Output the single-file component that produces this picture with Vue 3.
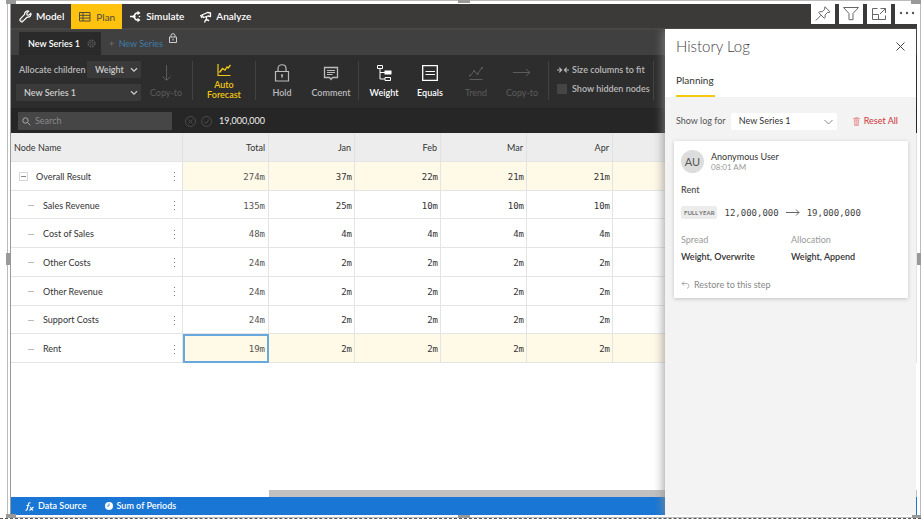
<script setup>
import { ref } from 'vue'

const months = ['Jan', 'Feb', 'Mar', 'Apr']
const rows = [
  { name: 'Overall Result', total: '274m', values: ['37m', '22m', '21m', '21m'], root: true, shaded: true },
  { name: 'Sales Revenue', total: '135m', values: ['25m', '10m', '10m', '10m'] },
  { name: 'Cost of Sales', total: '48m', values: ['4m', '4m', '4m', '4m'] },
  { name: 'Other Costs', total: '24m', values: ['2m', '2m', '2m', '2m'] },
  { name: 'Other Revenue', total: '24m', values: ['2m', '2m', '2m', '2m'] },
  { name: 'Support Costs', total: '24m', values: ['2m', '2m', '2m', '2m'] },
  { name: 'Rent', total: '19m', values: ['2m', '2m', '2m', '2m'], shaded: true, selected: true }
]
const method = ref('Weight')
const series = ref('New Series 1')
const logSeries = ref('New Series 1')
const search = ref('')
const showHidden = ref(false)
</script>

<template>
  <div class="report">
    <span class="handle top-left"></span>
    <span class="handle top"></span>
    <span class="handle top-right"></span>
    <span class="handle left"></span>
    <span class="handle right"></span>
    <span class="handle bottom-left"></span>
    <span class="handle bottom"></span>
    <span class="handle bottom-right"></span>

    <div class="visual">
      <nav class="modes">
        <button class="mode model">
          <svg width="13" height="13" viewBox="0 0 13 13"><path d="M11.8 3.2 9.7 5.1 8 4.9 7.8 3.2 9.8 1.2C8 .4 5.4 1.600 5.600 4.400L1.300 8.900c-1.200 1.500.9 3.700 2.500 2.500L8.300 7c2.700.400 4.300-1.800 3.500-3.800z" fill="none" stroke="currentColor" stroke-width="1.200" stroke-linejoin="round" /><circle cx="3" cy="10" r=".6" fill="currentColor" /></svg>
          Model
        </button>
        <button class="mode plan active">
          <svg width="12" height="11" viewBox="0 0 12 11"><path d="M.5 1.500h10.500v8.500H.5zM.5 4.300h10.500M.5 7.100h10.500M4 1.500v8.500" fill="none" stroke="currentColor" /></svg>
          Plan
        </button>
        <button class="mode simulate">
          <svg width="12" height="13" viewBox="0 0 12 13"><path d="M0 6.500h4M8.500 3H7.500Q4.500 3 4.500 6.500t3 3.500H8.500" fill="none" stroke="currentColor" stroke-width="1.400" /><path d="M7.500.7l3 2.300-3 2.300zM7.500 7.700l3 2.300-3 2.300z" fill="currentColor" /><circle cx="4" cy="6.500" r="1.500" fill="currentColor" /><circle cx="9.500" cy="6.500" r=".8" fill="currentColor" /></svg>
          Simulate
        </button>
        <button class="mode analyze">
          <svg width="12" height="13" viewBox="0 0 12 13"><path d="M2 5 7.500 2.500l3 .5v3.500L8 6 3.500 7.500zM.5 5l1.500 3M6.500 7v2.500M4.500 12.500l1-2.500H8l1 1" fill="none" stroke="currentColor" stroke-width="1.300" stroke-linejoin="round" /></svg>
          Analyze
        </button>
      </nav>

      <div class="tabs">
        <button class="tab">
          New Series 1
          <svg width="9" height="9" viewBox="0 0 9 9"><circle cx="4.500" cy="4.500" r="3.300" fill="none" stroke="#5a5a5a" stroke-width="1.600" stroke-dasharray="1.600 1" /><circle cx="4.500" cy="4.500" r="1.500" fill="none" stroke="#5a5a5a" stroke-width=".8" /></svg>
        </button>
        <button class="add"><span class="plus">+</span> New Series</button>
        <svg class="tab-lock" width="8" height="10" viewBox="0 0 8 10"><path d="M.5 4h7v5.500h-7zM2 4V2.500q0-1.800 2-1.800t2 1.800V4M4 5.500v2" fill="none" stroke="#d0d0d0" /></svg>
      </div>

      <div class="toolbar">
        <div class="allocate">
          <div class="allocate-row">
            <label for="method">Allocate children</label>
            <span class="pick short">
              <select id="method" v-model="method"><option>Weight</option></select>
              <svg width="8" height="6" viewBox="0 0 8 6"><path d="M1 1.200l3 3 3-3" fill="none" stroke="#ccc" stroke-width="1.300" /></svg>
            </span>
          </div>
          <span class="pick">
            <select v-model="series" aria-label="Series"><option>New Series 1</option></select>
            <svg width="8" height="6" viewBox="0 0 8 6"><path d="M1 1.200l3 3 3-3" fill="none" stroke="#ccc" stroke-width="1.300" /></svg>
          </span>
        </div>
        <div class="group">
          <button class="tool off" disabled>
            <svg width="16" height="20" viewBox="0 0 16 20"><path d="M8.500 2v15M4.500 13.500l4 4 4-4" fill="none" stroke="currentColor" /></svg>
            <span>Copy-to</span>
          </button>
        </div>
        <i class="rule"></i>
        <div class="group wide">
          <button class="tool forecast">
            <svg width="16" height="14" viewBox="0 0 16 14"><path d="M2 1v11.500h12.500" fill="none" stroke="currentColor" stroke-width="1.200" /><path d="M3.500 9.500l3-4 2.500 1.700L11 4l1.200 1 2.300-3" fill="none" stroke="currentColor" stroke-width="1.300" /></svg>
            <span>Auto Forecast</span>
          </button>
        </div>
        <i class="rule"></i>
        <div class="group spaced">
          <button class="tool">
            <svg width="16" height="20" viewBox="0 0 16 20"><path d="M1.500 8.500h13v9.500h-13zM4 8.500V5.500C4 .5 12 .5 12 5.500v3" fill="none" stroke="currentColor" stroke-width="1.200" /><circle cx="8" cy="12.300" r="1.100" fill="currentColor" /><path d="M8 12v3" stroke="currentColor" /></svg>
            <span>Hold</span>
          </button>
          <button class="tool">
            <svg width="16" height="20" viewBox="0 0 16 20"><path d="M1.500 4.500h13v10H9.500L8 16.500 6.500 14.500h-5z" fill="none" stroke="currentColor" stroke-width="1.300" /><path d="M4 7.500h8M4 9.500h8M4 11.500h5.500" stroke="currentColor" /></svg>
            <span>Comment</span>
          </button>
        </div>
        <i class="rule"></i>
        <div class="group">
          <button class="tool bright">
            <svg width="16" height="20" viewBox="0 0 16 20"><path d="M1.500 2.500h5v3h-5zM9 14.500h5.500v3H9zM4 5.500v10.500h5M4 9.500h5" fill="none" stroke="currentColor" /><path d="M8.500 7.500h7v4h-7z" fill="currentColor" /></svg>
            <span>Weight</span>
          </button>
          <button class="tool bright">
            <svg width="16" height="20" viewBox="0 0 16 20"><path d="M.7 2.700h14.600v14.600H.7z" fill="none" stroke="currentColor" stroke-width="1.300" /><path d="M3.500 8.500h9.500M3.500 11.500h9.500" stroke="currentColor" /></svg>
            <span>Equals</span>
          </button>
          <button class="tool off" disabled>
            <svg width="16" height="20" viewBox="0 0 16 20"><path d="M1.500 16.500h13M2 13l4-5 3.500 3L14 4.500" fill="none" stroke="currentColor" /><circle cx="2" cy="12.500" r="1" fill="currentColor" /><circle cx="6" cy="8" r="1" fill="currentColor" /><circle cx="9.500" cy="11" r="1" fill="currentColor" /><circle cx="14" cy="5" r="1" fill="currentColor" /></svg>
            <span>Trend</span>
          </button>
          <button class="tool off" disabled>
            <svg width="18" height="20" viewBox="0 0 18 20"><path d="M0 9.500h17M13 6l4 3.500-4 3.500" fill="none" stroke="currentColor" /></svg>
            <span>Copy-to</span>
          </button>
        </div>
        <i class="rule"></i>
        <div class="options">
          <button class="option">
            <svg width="12" height="8" viewBox="0 0 12 8"><path d="M0 4h4.500M2.300 1.700 4.600 4 2.300 6.300M12 4H7.500M9.700 1.700 7.400 4 9.700 6.300" fill="none" stroke="currentColor" stroke-width="1.100" /></svg>
            Size columns to fit
          </button>
          <label class="option"><input v-model="showHidden" type="checkbox" />Show hidden nodes</label>
        </div>
        <i class="rule"></i>
      </div>

      <div class="formula">
        <label class="search">
          <svg width="9" height="9" viewBox="0 0 9 9"><circle cx="3.500" cy="3.500" r="2.700" fill="none" stroke="#aaa" /><path d="M5.500 5.500 8.300 8.300" stroke="#aaa" /></svg>
          <input v-model="search" type="text" placeholder="Search" aria-label="Search" />
        </label>
        <div class="entry">
          <svg width="11" height="11" viewBox="0 0 11 11"><circle cx="5.500" cy="5.500" r="5" fill="none" stroke="#4c4c4c" /><path d="M3.500 3.500l4 4M7.500 3.500l-4 4" stroke="#4c4c4c" /></svg>
          <svg width="11" height="11" viewBox="0 0 11 11"><circle cx="5.500" cy="5.500" r="5" fill="none" stroke="#4c4c4c" /><path d="M3 5.500l2 2 3-4" fill="none" stroke="#4c4c4c" /></svg>
          <span>19,000,000</span>
        </div>
      </div>

      <table class="sheet">
        <thead>
          <tr>
            <th class="node">Node Name</th>
            <th class="amount">Total</th>
            <th v-for="m in months" :key="m" class="amount">{{ m }}</th>
            <th></th>
          </tr>
        </thead>
        <tbody>
          <tr v-for="row in rows" :key="row.name" :class="{ shaded: row.shaded }">
            <td class="node">
              <div class="node-line" :class="{ child: !row.root }">
                <svg v-if="row.root" width="9" height="9" viewBox="0 0 9 9"><path d="M.5.5h8v8h-8z" fill="none" stroke="#d5d5d5" /><path d="M2 4.500h5" stroke="#888" /></svg>
                <svg v-else width="6" height="9" viewBox="0 0 6 9"><path d="M0 4.500h6" stroke="#bbb" /></svg>
                <span class="node-name">{{ row.name }}</span>
                <svg width="3" height="11" viewBox="0 0 3 11"><path d="M1 1h1v1H1zM1 5h1v1H1zM1 9h1v1H1z" fill="#777" /></svg>
              </div>
            </td>
            <td class="total" :class="{ selected: row.selected }">{{ row.total }}</td>
            <td v-for="(v, i) in row.values" :key="i">{{ v }}</td>
            <td></td>
          </tr>
        </tbody>
      </table>

      <div class="space"></div>
      <div class="scrollbar"><div class="thumb"></div></div>
      <footer class="status">
        <span class="source">
          <svg width="9" height="9" viewBox="0 0 9 9"><path d="M5.500 1Q3.700.2 3.300 2.500L2.300 7Q1.900 8.600.5 8M1.500 3.500h3M5 5l3 3.500M8.500 5 4.500 8.500" fill="none" stroke="#fff" stroke-width="1.100" /></svg>
          Data Source
        </span>
        <span class="source">
          <svg width="8" height="8" viewBox="0 0 8 8"><circle cx="4" cy="4" r="4" fill="#fff" /><path d="M4 1.500V4H1.800" fill="none" stroke="#1976d5" stroke-width=".8" /></svg>
          Sum of Periods
        </span>
      </footer>

      <aside class="drawer">
        <header class="drawer-head">
          <h2>History Log</h2>
          <button class="close" aria-label="Close">
            <svg width="9" height="9" viewBox="0 0 9 9"><path d="M.5.5l8 8M8.500.5l-8 8" stroke="#444" /></svg>
          </button>
        </header>
        <div class="drawer-tabs"><button>Planning</button></div>
        <div class="log-filter">
          <label for="log-series">Show log for</label>
          <span class="pick light">
            <select id="log-series" v-model="logSeries"><option>New Series 1</option></select>
            <svg width="9" height="6" viewBox="0 0 9 6"><path d="M.5 1l4 4 4-4" fill="none" stroke="#888" /></svg>
          </span>
          <button class="reset">
            <svg width="7" height="9" viewBox="0 0 7 9"><path d="M0 1.500h7M2.300 1.300V.5h2.400v.8" fill="none" stroke="#e5a0a0" /><path d="M.7 2.200h5.600L5.800 9H1.200z" fill="#e9a9a9" /><path d="M2.600 3.500v4M4.400 3.500v4" stroke="#f3d8d8" stroke-width=".7" /></svg>
            Reset All
          </button>
        </div>
        <article class="card">
          <div class="person">
            <span class="avatar">AU</span>
            <div>
              <div class="who">Anonymous User</div>
              <div class="when">08:01 AM</div>
            </div>
          </div>
          <div class="item">Rent</div>
          <div class="change">
            <span class="badge">FULL YEAR</span>
            <span class="figure">12,000,000</span>
            <svg width="14" height="7" viewBox="0 0 14 7"><path d="M0 3.500h13M10 .5l3 3-3 3" fill="none" stroke="#666" /></svg>
            <span class="figure">19,000,000</span>
          </div>
          <dl class="facts">
            <div><dt>Spread</dt><dd>Weight, Overwrite</dd></div>
            <div><dt>Allocation</dt><dd>Weight, Append</dd></div>
          </dl>
          <button class="restore">
            <svg width="9" height="9" viewBox="0 0 9 9"><path d="M3 .5l-2 2 2 2M1 2.500h4.500c3 0 3 4 .5 5" fill="none" stroke="#aaa" /></svg>
            Restore to this step
          </button>
        </article>
      </aside>

      <div class="visual-menu">
        <button aria-label="Pin visual"><svg width="16" height="16" viewBox="0 0 16 16"><path d="M10 .8l5 5-1 .7-1.200-.3-2.800 2.800.2 2.500-1 .8L3.800 6.600l.8-1 2.500.2 2.800-2.800-.4-1.200zM6.200 9.100.8 14.500" fill="none" stroke="#666" /></svg></button>
        <button aria-label="Filters"><svg width="16" height="16" viewBox="0 0 16 16"><path d="M.5 1.500h15L10 7.500v6.200H6V7.500z" fill="none" stroke="#666" /></svg></button>
        <button aria-label="Focus mode"><svg width="16" height="16" viewBox="0 0 16 16"><path d="M6.500 2.500h-5v11h13V9.500M9.500 2.500h5V7M14.500 2.500 9 8M1.500 8.500h6v5" fill="none" stroke="#666" /></svg></button>
        <button aria-label="More options"><svg width="16" height="16" viewBox="0 0 16 16"><circle cx="2" cy="7" r="1.200" fill="#555" /><circle cx="8" cy="7" r="1.200" fill="#555" /><circle cx="14" cy="7" r="1.200" fill="#555" /></svg></button>
      </div>
    </div>
  </div>
</template>

<style>
body { background: #fff; }
</style>

<style scoped>
* { box-sizing: border-box; }
.report {
  position: relative;
  display: flex;
  min-height: 100vh;
  padding: 4px 4px 3px 10px;
  border-bottom: 1px dashed #555;
  color: #333;
  font: 9px/12px Lato, "Noto Sans", sans-serif;
}
.report::before {
  content: "";
  position: absolute;
  inset: 0 0 0 7px;
  border: 1px solid #bbb;
}
button {
  padding: 0;
  border: 0;
  background: none;
  color: inherit;
  font: inherit;
  white-space: nowrap;
}
svg { flex: none; }
.handle { position: absolute; z-index: 3; background: #999; }
.top-left { top: 0; left: 6px; width: 10px; height: 4px; }
.top { top: 0; left: 458px; width: 12px; height: 3px; }
.top-right { top: 0; right: 0; width: 10px; height: 4px; }
.left { top: 50%; left: 6px; width: 4px; height: 12px; transform: translateY(-50%); }
.right { top: 50%; right: 0; width: 4px; height: 12px; transform: translateY(-50%); }
.bottom-left { bottom: 0; left: 6px; width: 10px; height: 4px; }
.bottom { bottom: 0; left: 458px; width: 12px; height: 3px; }
.bottom-right { bottom: 0; right: 0; width: 9px; height: 3px; }
.visual {
  position: relative;
  display: flex;
  flex: 1;
  flex-direction: column;
  min-width: 0;
  border-left: 1px solid #999;
  background: #fff;
}
.modes {
  display: flex;
  height: 26px;
  border-bottom: 2px solid #474747;
  background: #3b3a39;
  color: #fff;
  font-size: 10px;
  font-weight: 600;
}
.mode { display: flex; align-items: center; gap: 4px; padding: 0 7px 0 8px; }
.plan { gap: 5px; margin-bottom: -1px; background: #ffc20e; color: #4d4a3c; font-weight: 400; }
.mode.simulate { padding-right: 8px; }
.tabs { display: flex; height: 25px; padding-left: 8px; background: #404040; }
.tab {
  display: flex;
  align-items: center;
  gap: 7px;
  padding: 0 5px 0 9px;
  margin-top: 2px;
  background: #2a2a2a;
  color: #fff;
  font-weight: 600;
}
.add { padding: 2px 6px 0 8px; color: #3f7ca8; }
.plus { margin-right: 2px; color: #777; }
.tab-lock { margin-top: 3px; }
.toolbar { display: flex; height: 53px; padding-left: 5px; background: #2d2d2d; color: #bbb; font-weight: 600; }
.allocate { display: flex; flex-direction: column; gap: 6px; width: 125px; padding-top: 6px; }
.allocate-row { display: flex; align-items: center; justify-content: space-between; padding-left: 3px; }
.allocate-row label { white-space: nowrap; }
.pick { position: relative; display: block; }
.pick select {
  display: block;
  width: 100%;
  height: 17px;
  padding: 0 8px;
  border: 0;
  border-radius: 1px;
  appearance: none;
  background: #3a3a3a;
  color: #ccc;
  font: inherit;
}
.pick svg { position: absolute; top: 6px; right: 3px; }
.short { width: 54px; }
.group { display: flex; padding: 0 3px 0 2px; }
.wide { padding: 0 8px; }
.spaced { gap: 3px; padding: 0 4px 0 3px; }
.rule { width: 1px; height: 39px; margin-top: 6px; background: #424242; }
.tool {
  display: flex;
  flex-direction: column;
  align-items: center;
  gap: 4px;
  width: 46px;
  padding-top: 8px;
}
.tool.off { color: #5c5c5c; font-weight: 400; }
.tool.bright { color: #fff; }
.tool.forecast { gap: 3px; color: #f2c811; line-height: 10px; white-space: normal; }
.options { display: flex; flex-direction: column; gap: 7px; width: 104px; padding: 9px 0 0 8px; }
.option { display: flex; align-items: center; gap: 3px; white-space: nowrap; }
.option input { width: 10px; height: 10px; margin: 0 2px 0 0; appearance: none; background: #454545; }
.formula { display: flex; height: 25px; border-top: 1px solid #222; background: #262626; }
.search {
  display: flex;
  align-items: center;
  gap: 4px;
  width: 154px;
  height: 18px;
  margin: 3px 11px 0 7px;
  padding-left: 4px;
  background: #464646;
}
.search input { width: 100px; padding: 0; border: 0; outline: 0; background: none; color: #ddd; font: inherit; }
.search input::placeholder { color: #8a8a8a; }
.entry { display: flex; align-items: center; gap: 5px; padding: 0 0 0 2px; color: #eee; }
.entry span { padding-left: 2px; }
.sheet { width: 100%; height: 230px; table-layout: fixed; border-spacing: 0; }
.sheet th {
  height: 29px;
  padding: 1px 3px 0;
  border-right: 1px solid #e2e2e2;
  border-bottom: 1px solid #e4e4e4;
  background: #ededed;
  font-weight: 400;
  text-align: left;
}
.sheet th.node { width: 172px; }
.sheet th.amount { width: 86px; text-align: right; }
.sheet td {
  padding: 2px 2px 0;
  border-right: 1px solid #e4e4e4;
  border-bottom: 1px solid #e4e4e4;
  color: #333;
  font-family: "DejaVu Sans Mono", monospace;
  text-align: right;
}
.sheet td.node { font-family: inherit; text-align: left; }
.sheet td.total { color: #555; padding-right: 3px; }
.sheet .shaded td:not(.node) { background: #fff9e8; }
.sheet .shaded td.selected { outline: 2px solid #68a8dc; outline-offset: -2px; }
.node-line { display: flex; align-items: center; gap: 8px; padding: 0 4px 0 6px; }
.node-line.child { padding-left: 15px; gap: 9px; }
.node-name { flex: 1; }
.space { flex: 1; }
.scrollbar { height: 7px; padding-left: 258px; }
.thumb { height: 7px; background: #c1c1c1; }
.status { display: flex; align-items: center; gap: 18px; height: 18px; padding-left: 14px; background: #1976d5; color: #fff; font-weight: 600; }
.source { display: flex; align-items: center; gap: 4px; }
.drawer {
  position: absolute;
  top: 25px;
  right: 1px;
  bottom: 0;
  width: 251px;
  background: #f3f3f3;
  box-shadow: -2px 0 9px rgba(140, 140, 140, .75);
  clip-path: inset(0 0 0 -14px);
}
.drawer-head { display: flex; align-items: center; justify-content: space-between; height: 34px; padding: 0 11px; background: #fff; }
.drawer-head h2 { margin: 0; color: #444; font-size: 15px; font-weight: 300; line-height: 20px; }
.close { display: flex; }
.drawer-tabs { height: 34px; padding-left: 11px; background: #fff; }
.drawer-tabs button { height: 34px; padding: 2px 1px 0 0; border-bottom: 2px solid #f2c811; font-size: 10px; }
.log-filter { display: flex; align-items: center; height: 48px; padding: 0 18px 0 11px; color: #555; white-space: nowrap; }
.light { width: 106px; margin: 0 16px 0 auto; }
.light select { background: #fff; color: #333; }
.light svg { right: 4px; }
.reset { display: flex; align-items: center; gap: 4px; color: #d13438; }
.card { margin: -4px 8px 0 9px; padding: 9px 7px 7px; background: #fff; box-shadow: 0 1px 4px rgba(0, 0, 0, .2); }
.person { display: flex; align-items: center; gap: 7px; line-height: 11px; }
.avatar { display: grid; place-items: center; width: 23px; height: 23px; border-radius: 50%; background: #ddd; color: #555; font-size: 11px; }
.when { color: #999; font-size: 8px; }
.item { margin-top: 11px; color: #555; font-weight: 600; }
.change { display: flex; align-items: center; gap: 7px; height: 13px; margin-top: 10px; }
.badge { padding: 0 3px; border-radius: 2px; background: #ececec; color: #777; font-size: 6px; font-weight: 700; line-height: 13px; white-space: nowrap; }
.figure { color: #444; font-family: "DejaVu Sans Mono", monospace; }
.facts { display: grid; grid-template-columns: 110px 1fr; margin: 15px 0 16px; }
.facts dt { color: #999; }
.facts dd { margin: 5px 0 0; font-weight: 600; }
.restore { display: flex; align-items: center; gap: 4px; color: #888; }
.visual-menu { position: absolute; z-index: 4; top: 0; right: -2px; display: flex; gap: 4px; }
.visual-menu button { display: grid; place-items: center; width: 24px; height: 20px; background: #fff; }
</style>
